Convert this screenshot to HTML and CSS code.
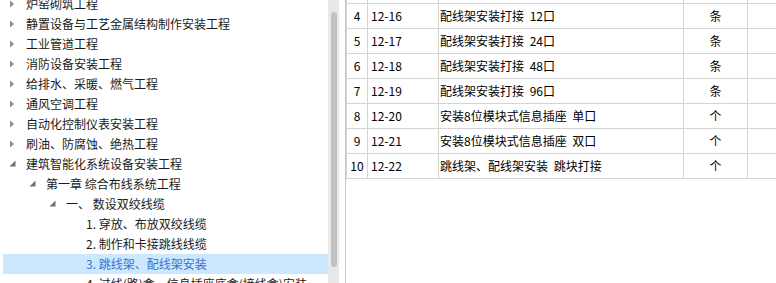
FILE: index.html
```html
<!DOCTYPE html>
<html lang="zh-CN">

<head>
    <meta charset="UTF-8">
    <meta name="viewport" content="width=device-width, initial-scale=1.0">
    <title>定额章节</title>
    <link rel="stylesheet" href="styles.css">
</head>

<body>
    <div class="tree-panel">
        <ul class="tree">
            <li class="node lv0"><svg class="arrow" viewBox="0 0 18 20"><polygon points="2,6.5 6,10 2,13.5" /></svg><span>炉窑砌筑工程</span></li>
            <li class="node lv0"><svg class="arrow" viewBox="0 0 18 20"><polygon points="2,6.5 6,10 2,13.5" /></svg><span>静置设备与工艺金属结构制作安装工程</span></li>
            <li class="node lv0"><svg class="arrow" viewBox="0 0 18 20"><polygon points="2,6.5 6,10 2,13.5" /></svg><span>工业管道工程</span></li>
            <li class="node lv0"><svg class="arrow" viewBox="0 0 18 20"><polygon points="2,6.5 6,10 2,13.5" /></svg><span>消防设备安装工程</span></li>
            <li class="node lv0"><svg class="arrow" viewBox="0 0 18 20"><polygon points="2,6.5 6,10 2,13.5" /></svg><span>给排水、采暖、燃气工程</span></li>
            <li class="node lv0"><svg class="arrow" viewBox="0 0 18 20"><polygon points="2,6.5 6,10 2,13.5" /></svg><span>通风空调工程</span></li>
            <li class="node lv0"><svg class="arrow" viewBox="0 0 18 20"><polygon points="2,6.5 6,10 2,13.5" /></svg><span>自动化控制仪表安装工程</span></li>
            <li class="node lv0"><svg class="arrow" viewBox="0 0 18 20"><polygon points="2,6.5 6,10 2,13.5" /></svg><span>刷油、防腐蚀、绝热工程</span></li>
            <li class="node lv0"><svg class="arrow open" viewBox="0 0 18 20"><polygon points="7.5,6.5 7.5,12.5 1.5,12.5" /></svg><span>建筑智能化系统设备安装工程</span></li>
            <li class="node lv1"><svg class="arrow open" viewBox="0 0 18 20"><polygon points="7.5,6.5 7.5,12.5 1.5,12.5" /></svg><span>第一章 综合布线系统工程</span></li>
            <li class="node lv2"><svg class="arrow open" viewBox="0 0 18 20"><polygon points="7.5,6.5 7.5,12.5 1.5,12.5" /></svg><span>一、 数设双绞线缆</span></li>
            <li class="node lv3"><span class="leaf"></span><span>1. 穿放、布放双绞线缆</span></li>
            <li class="node lv3"><span class="leaf"></span><span>2. 制作和卡接跳线线缆</span></li>
            <li class="node lv3 selected"><span class="leaf"></span><span>3. 跳线架、配线架安装</span></li>
            <li class="node lv3"><span class="leaf"></span><span>4. 过线(路)盒、信息插座底盒(接线盒)安装</span></li>
        </ul>
        <div class="scrollbar">
            <div class="thumb"></div>
        </div>
    </div>

    <div class="grid-panel">
        <table class="items">
            <colgroup>
                <col class="c-no">
                <col class="c-code">
                <col class="c-name">
                <col class="c-unit">
                <col class="c-rest">
            </colgroup>
            <tr class="hidden-row"><td></td><td></td><td></td><td></td><td></td></tr>
            <tr><td class="no">4</td><td>12-16</td><td class="name">配线架安装打接 12口</td><td class="unit">条</td><td></td></tr>
            <tr><td class="no">5</td><td>12-17</td><td class="name">配线架安装打接 24口</td><td class="unit">条</td><td></td></tr>
            <tr><td class="no">6</td><td>12-18</td><td class="name">配线架安装打接 48口</td><td class="unit">条</td><td></td></tr>
            <tr><td class="no">7</td><td>12-19</td><td class="name">配线架安装打接 96口</td><td class="unit">条</td><td></td></tr>
            <tr><td class="no">8</td><td>12-20</td><td class="name">安装8位模块式信息插座 单口</td><td class="unit">个</td><td></td></tr>
            <tr><td class="no">9</td><td>12-21</td><td class="name">安装8位模块式信息插座 双口</td><td class="unit">个</td><td></td></tr>
            <tr><td class="no">10</td><td>12-22</td><td class="name">跳线架、配线架安装 跳块打接</td><td class="unit">个</td><td></td></tr>
        </table>
    </div>
</body>

</html>
```

FILE: styles.css
```css
* {
    margin: 0;
    padding: 0;
    box-sizing: border-box;
}

html,
body {
    height: 100%;
    width: 100%;
}

body {
    display: flex;
    overflow: hidden;
    background-color: #ffffff;
    font-family: "Noto Sans CJK SC", "Noto Sans", sans-serif;
    font-size: 12px;
    color: #1a1a1a;
}

/* left tree */
.tree-panel {
    width: 345px;
    flex: none;
    display: flex;
    padding-right: 6px;
    overflow: hidden;
}

.tree {
    list-style: none;
    flex: 1;
    margin-top: -6px;
    padding-left: 3px;
    padding-right: 0;
}

.node {
    height: 20px;
    line-height: 20px;
    display: flex;
    align-items: center;
    white-space: nowrap;
    overflow: hidden;
}

.node.lv0 { padding-left: 5px; }
.node.lv1 { padding-left: 25px; }
.node.lv2 { padding-left: 45px; }
.node.lv3 { padding-left: 65px; }

.arrow,
.leaf {
    width: 18px;
    height: 20px;
    flex: none;
}

.arrow polygon {
    fill: #8c8c8c;
}

.arrow.open polygon {
    fill: #707070;
}

.node.selected {
    background-color: #cce8ff;
    color: #3d6fd0;
}

.scrollbar {
    width: 11px;
    flex: none;
    background-color: #e8e8e8;
    padding: 12px 2px 0 3px;
}

.thumb {
    height: 255px;
    background-color: #c2c2c2;
    border-radius: 3px;
}

/* right grid */
.grid-panel {
    flex: 1;
    border-left: 1px solid #c8c8c8;
    overflow: hidden;
}

.items {
    border-collapse: collapse;
    table-layout: fixed;
    width: 470px;
    margin-top: -22px;
    color: #000000;
}

.c-no { width: 21px; }
.c-code { width: 71px; }
.c-name { width: 245px; }
.c-unit { width: 64px; }
.c-rest { width: 69px; }

.items td {
    height: 25px;
    border: 1px solid #d4d4d4;
    padding: 0 0 0 3px;
    white-space: nowrap;
    overflow: hidden;
    line-height: 22px;
}

.items td.no {
    text-align: center;
    padding: 0;
}

.items td.name {
    padding-left: 1px;
    word-spacing: 3px;
}

.items td.unit {
    text-align: center;
    padding: 0;
}
```
